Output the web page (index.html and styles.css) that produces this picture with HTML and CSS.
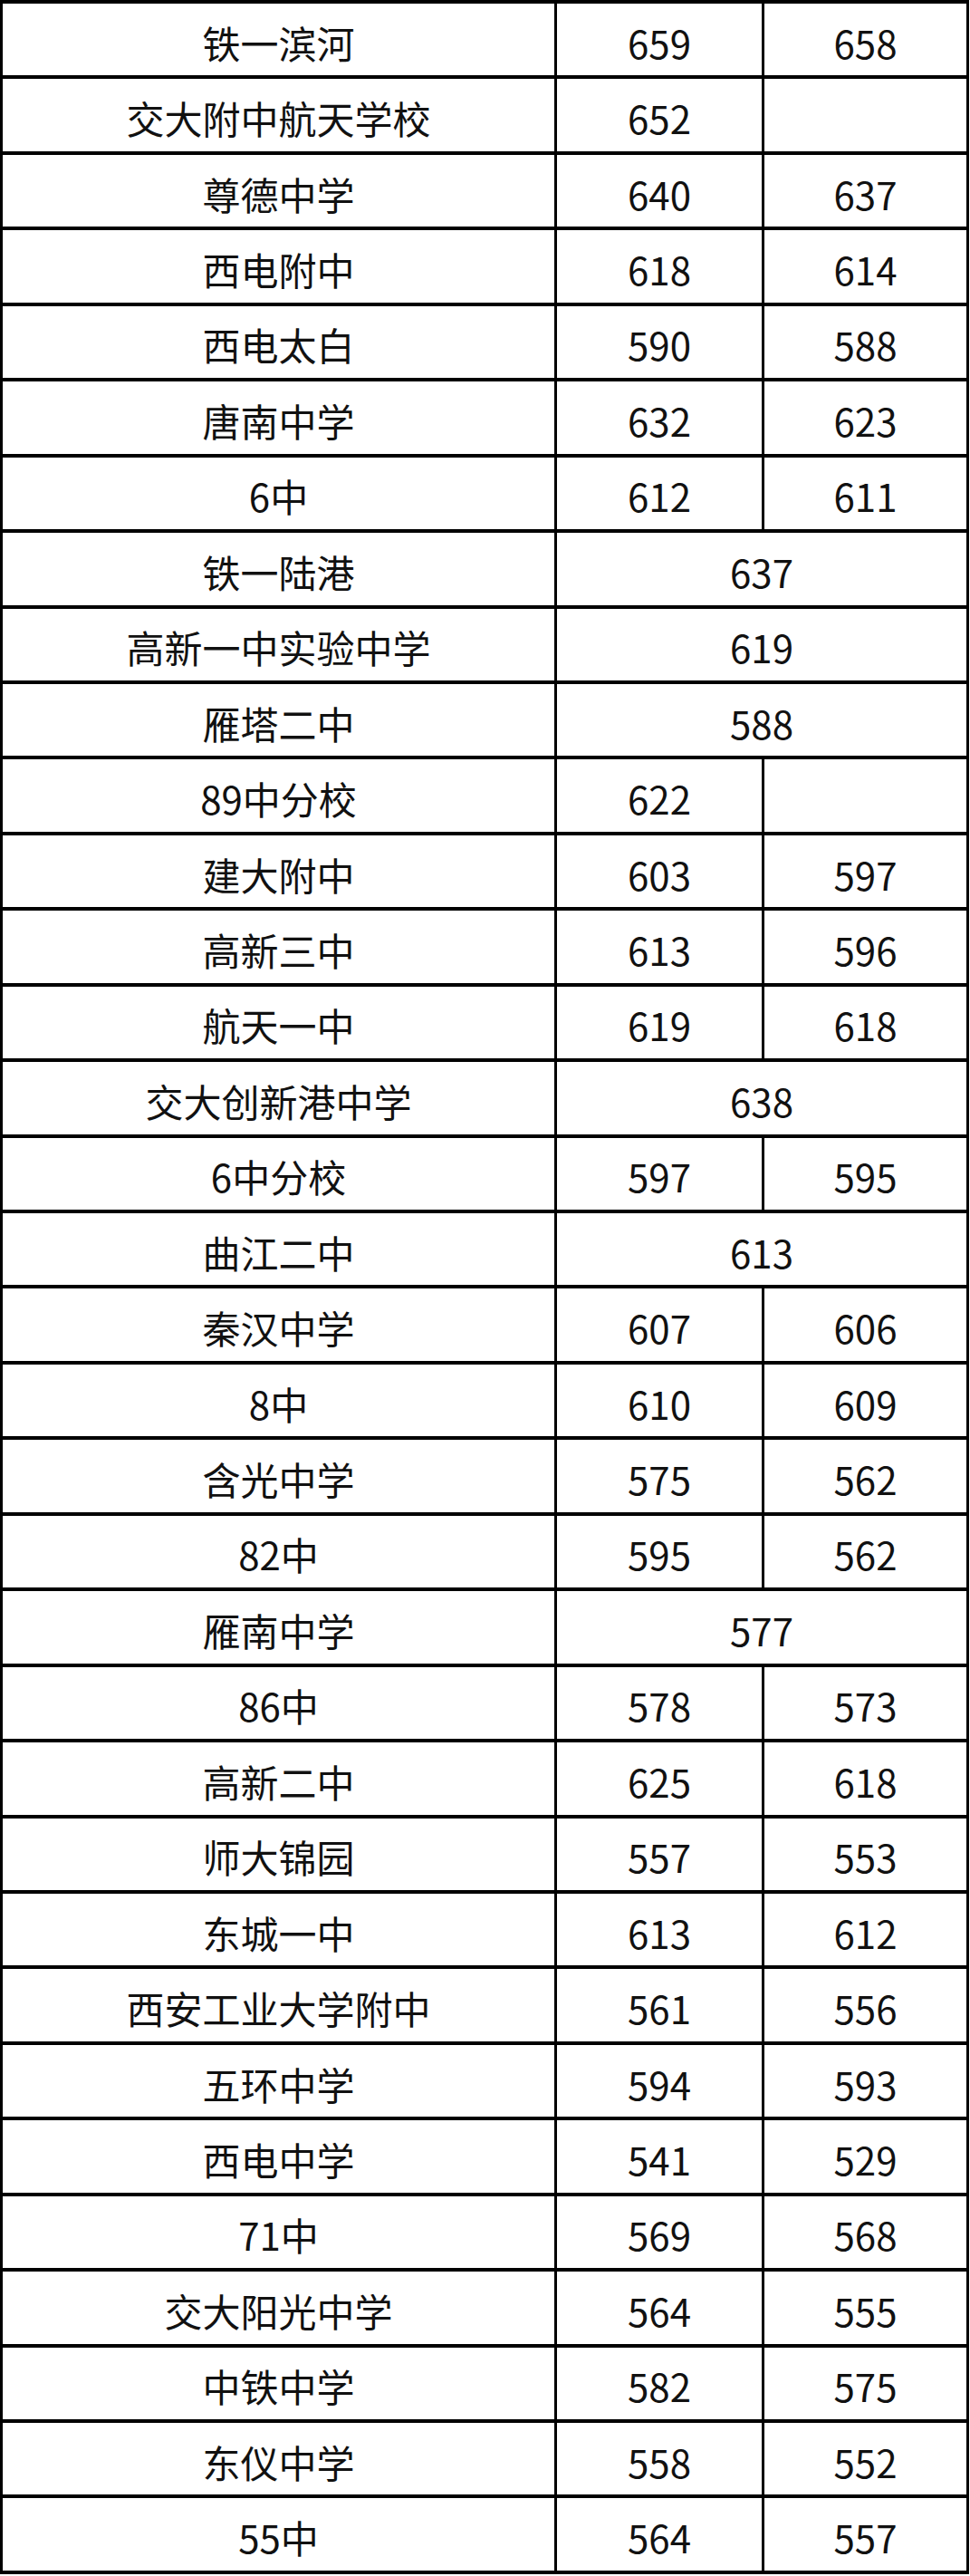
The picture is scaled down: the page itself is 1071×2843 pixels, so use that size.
FILE: index.html
```html
<!DOCTYPE html>
<html lang="zh-CN">
<head>
<meta charset="utf-8">
<title>分数线</title>
<link rel="stylesheet" href="styles.css">
</head>
<body>
<table class="scores">
<colgroup><col class="c-name"><col class="c-a"><col class="c-b"></colgroup>
<tbody>
<tr><td>铁一滨河</td><td>659</td><td>658</td></tr>
<tr><td>交大附中航天学校</td><td>652</td><td></td></tr>
<tr><td>尊德中学</td><td>640</td><td>637</td></tr>
<tr><td>西电附中</td><td>618</td><td>614</td></tr>
<tr><td>西电太白</td><td>590</td><td>588</td></tr>
<tr><td>唐南中学</td><td>632</td><td>623</td></tr>
<tr><td>6中</td><td>612</td><td>611</td></tr>
<tr><td>铁一陆港</td><td colspan="2">637</td></tr>
<tr><td>高新一中实验中学</td><td colspan="2">619</td></tr>
<tr><td>雁塔二中</td><td colspan="2">588</td></tr>
<tr><td>89中分校</td><td>622</td><td></td></tr>
<tr><td>建大附中</td><td>603</td><td>597</td></tr>
<tr><td>高新三中</td><td>613</td><td>596</td></tr>
<tr><td>航天一中</td><td>619</td><td>618</td></tr>
<tr><td>交大创新港中学</td><td colspan="2">638</td></tr>
<tr><td>6中分校</td><td>597</td><td>595</td></tr>
<tr><td>曲江二中</td><td colspan="2">613</td></tr>
<tr><td>秦汉中学</td><td>607</td><td>606</td></tr>
<tr><td>8中</td><td>610</td><td>609</td></tr>
<tr><td>含光中学</td><td>575</td><td>562</td></tr>
<tr><td>82中</td><td>595</td><td>562</td></tr>
<tr><td>雁南中学</td><td colspan="2">577</td></tr>
<tr><td>86中</td><td>578</td><td>573</td></tr>
<tr><td>高新二中</td><td>625</td><td>618</td></tr>
<tr><td>师大锦园</td><td>557</td><td>553</td></tr>
<tr><td>东城一中</td><td>613</td><td>612</td></tr>
<tr><td>西安工业大学附中</td><td>561</td><td>556</td></tr>
<tr><td>五环中学</td><td>594</td><td>593</td></tr>
<tr><td>西电中学</td><td>541</td><td>529</td></tr>
<tr><td>71中</td><td>569</td><td>568</td></tr>
<tr><td>交大阳光中学</td><td>564</td><td>555</td></tr>
<tr><td>中铁中学</td><td>582</td><td>575</td></tr>
<tr><td>东仪中学</td><td>558</td><td>552</td></tr>
<tr><td>55中</td><td>564</td><td>557</td></tr>
</tbody>
</table>
</body>
</html>
```
FILE: styles.css
```css
html, body {
  margin: 0;
  padding: 0;
  background: #fff;
}
.scores {
  width: 1070px;
  height: 2841px;
  table-layout: fixed;
  border-collapse: separate;
  border-spacing: 0;
  border-top: 4px solid #000;
  border-left: 3px solid #000;
  font-family: "Noto Sans CJK SC", "Noto Sans", sans-serif;
  font-size: 42px;
  color: #111;
}
.c-name { width: 612px; }
.c-a { width: 229px; }
.c-b { width: 226px; }
.scores td {
  border-right: 3px solid #000;
  border-bottom: 4px solid #000;
  padding: 6px 0 0 0;
  text-align: center;
  vertical-align: middle;
  line-height: 1;
}
```
